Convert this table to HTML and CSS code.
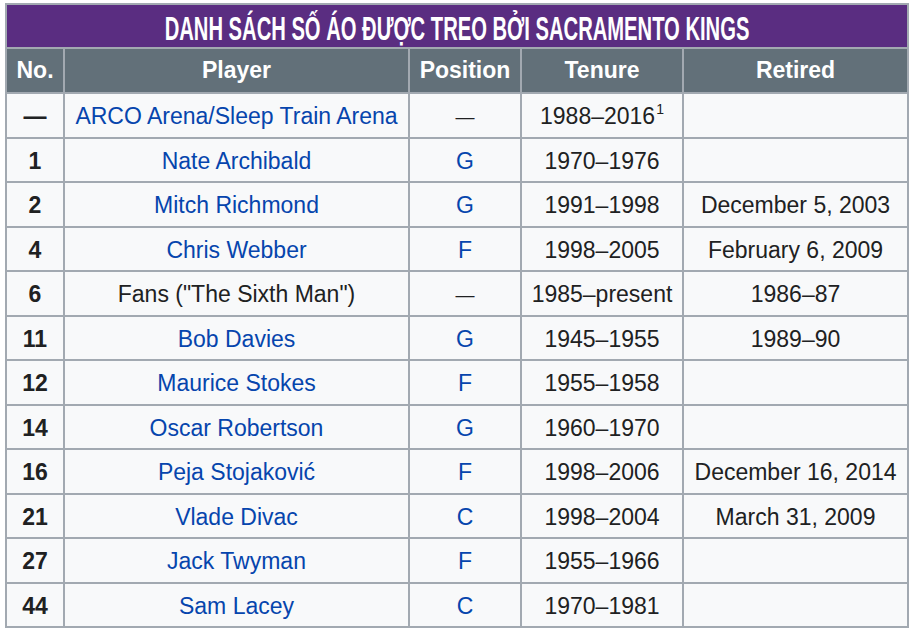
FILE: index.html
```html
<!DOCTYPE html>
<html lang="vi">
<head>
<meta charset="utf-8">
<title>Danh sách số áo được treo bởi Sacramento Kings</title>
<link rel="stylesheet" href="styles.css">
</head>
<body>
<div class="wrap">
<table class="retired">
  <colgroup>
    <col class="c-no">
    <col class="c-player">
    <col class="c-pos">
    <col class="c-ten">
    <col class="c-ret">
  </colgroup>
  <thead>
    <tr><th colspan="5" class="title"><span class="title-text">DANH SÁCH SỐ ÁO ĐƯỢC TREO BỞI SACRAMENTO KINGS</span></th></tr>
    <tr class="head">
      <th>No.</th><th>Player</th><th>Position</th><th>Tenure</th><th>Retired</th>
    </tr>
  </thead>
  <tbody>
    <tr><td class="no">—</td><td><a href="#">ARCO Arena/Sleep Train Arena</a></td><td class="dash">—</td><td>1988–2016<sup>1</sup></td><td></td></tr>
    <tr><td class="no">1</td><td><a href="#">Nate Archibald</a></td><td><a href="#">G</a></td><td>1970–1976</td><td></td></tr>
    <tr><td class="no">2</td><td><a href="#">Mitch Richmond</a></td><td><a href="#">G</a></td><td>1991–1998</td><td>December 5, 2003</td></tr>
    <tr><td class="no">4</td><td><a href="#">Chris Webber</a></td><td><a href="#">F</a></td><td>1998–2005</td><td>February 6, 2009</td></tr>
    <tr><td class="no">6</td><td>Fans ("The Sixth Man")</td><td class="dash">—</td><td>1985–present</td><td>1986–87</td></tr>
    <tr><td class="no">11</td><td><a href="#">Bob Davies</a></td><td><a href="#">G</a></td><td>1945–1955</td><td>1989–90</td></tr>
    <tr><td class="no">12</td><td><a href="#">Maurice Stokes</a></td><td><a href="#">F</a></td><td>1955–1958</td><td></td></tr>
    <tr><td class="no">14</td><td><a href="#">Oscar Robertson</a></td><td><a href="#">G</a></td><td>1960–1970</td><td></td></tr>
    <tr><td class="no">16</td><td><a href="#">Peja Stojaković</a></td><td><a href="#">F</a></td><td>1998–2006</td><td>December 16, 2014</td></tr>
    <tr><td class="no">21</td><td><a href="#">Vlade Divac</a></td><td><a href="#">C</a></td><td>1998–2004</td><td>March 31, 2009</td></tr>
    <tr><td class="no">27</td><td><a href="#">Jack Twyman</a></td><td><a href="#">F</a></td><td>1955–1966</td><td></td></tr>
    <tr><td class="no">44</td><td><a href="#">Sam Lacey</a></td><td><a href="#">C</a></td><td>1970–1981</td><td></td></tr>
  </tbody>
</table>
</div>
</body>
</html>
```
FILE: styles.css
```css
html, body {
  margin: 0;
  padding: 0;
  background: #ffffff;
}
body {
  font-family: "Liberation Sans", Arial, sans-serif;
  color: #202122;
}
.wrap {
  padding: 3px 0 0 5px;
}
.retired {
  border-collapse: collapse;
  table-layout: fixed;
  width: 902px;
  background: #f8f9fa;
  border: 2px solid #a2a9b1;
  font-size: 23px;
}
.c-no { width: 58px; }
.c-player { width: 345px; }
.c-pos { width: 112px; }
.c-ten { width: 162px; }
.c-ret { width: 225px; }
.retired th,
.retired td {
  border: 2px solid #a2a9b1;
  text-align: center;
  padding: 0;
  white-space: nowrap;
}
.retired td {
  height: 39.5px;
  padding-top: 3px;
}
.title {
  background: #5a2d81;
  color: #ffffff;
  height: 42px;
  line-height: 1;
}
.title-text {
  display: inline-block;
  font-size: 20.2px;
  font-weight: bold;
  transform: scaleY(1.62);
  transform-origin: center;
  white-space: nowrap;
  position: relative;
  top: 2px;
}
.head th {
  background: #627079;
  color: #ffffff;
  font-weight: bold;
  height: 43px;
}
.no {
  font-weight: bold;
}
.dash {
  font-size: 19px;
}
.retired a {
  color: #0645ad;
  text-decoration: none;
}
sup {
  font-size: 14px;
  line-height: 0;
  vertical-align: 10px;
  margin-left: 1px;
}
```
